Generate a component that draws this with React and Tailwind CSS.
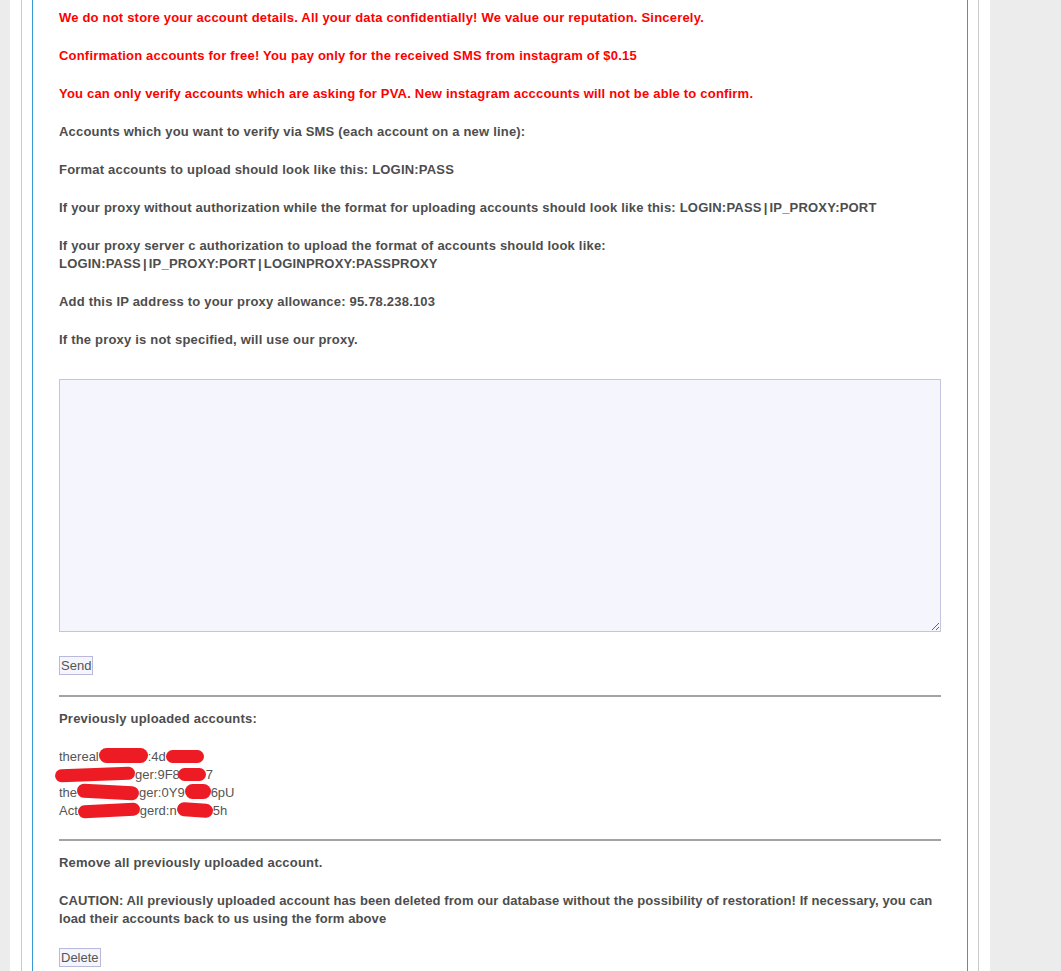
import React from 'react';

// red scribble standing in for a hidden part of an account line
function Redact({ w, className = '' }) {
  return (
    <span
      className={`inline-block h-[13px] rounded-full bg-[#ed1c24] align-[-2px] ${className}`}
      style={{ width: w }}
    />
  );
}

const Pipe = () => <span className="px-[2px]">|</span>;

function AccountsList() {
  return (
    <div className="text-[13px] leading-[18px] font-normal tracking-normal text-[#555]">
      <div className="whitespace-nowrap">
        thereal<Redact w={49} className="-mt-[3px] h-[15px]" />:4d<Redact w={38} className="h-[11px]" />
      </div>
      <div className="-ml-[4px] whitespace-nowrap">
        <Redact w={80} className="h-[13px] rotate-[-2deg]" />ger:9F8<Redact w={28} className="-ml-[2px] h-[12px]" />7
      </div>
      <div className="whitespace-nowrap">
        the<Redact w={62} className="h-[14px] rotate-[3deg]" />ger:0Y9<Redact w={26} className="h-[15px]" />6pU
      </div>
      <div className="whitespace-nowrap">
        Act<Redact w={62} className="h-[12px] rotate-[-3deg]" />gerd:n<Redact w={36} className="h-[14px] rotate-[4deg]" />5h
      </div>
    </div>
  );
}

export default function App() {
  return (
    <div className="min-h-screen bg-[#ececec] font-['Liberation_Sans',Arial,sans-serif]">
      <div className="ml-[10px] w-[980px] bg-white px-[11px]">
        <div className="border-x border-[#cccccc] bg-white px-[10px]">
          <div className="flex flex-col items-start gap-[20px] border-x border-[#3a9ad9] bg-white px-[26px] pt-[9px] pb-[40px] text-[13px] leading-[18px] font-bold tracking-[0.2px] text-[#4d4d4d]">
            <p className="text-[#ff0000]">
              We do not store your account details. All your data confidentially! We value our reputation. Sincerely.
            </p>
            <p className="text-[#ff0000]">
              Confirmation accounts for free! You pay only for the received SMS from instagram of $0.15
            </p>
            <p className="text-[#ff0000]">
              You can only verify accounts which are asking for PVA. New instagram acccounts will not be able to confirm.
            </p>
            <p>Accounts which you want to verify via SMS (each account on a new line):</p>
            <p>Format accounts to upload should look like this: LOGIN:PASS</p>
            <p>
              If your proxy without authorization while the format for uploading accounts should look like this: LOGIN:PASS<Pipe />IP_PROXY:PORT
            </p>
            <p>
              If your proxy server c authorization to upload the format of accounts should look like:
              <br />
              LOGIN:PASS<Pipe />IP_PROXY:PORT<Pipe />LOGINPROXY:PASSPROXY
            </p>
            <p>Add this IP address to your proxy allowance: 95.78.238.103</p>
            <p>If the proxy is not specified, will use our proxy.</p>

            <textarea className="mt-[10px] block h-[253px] w-[882px] resize border border-[#c4c4de] bg-[#f5f5fe] outline-none" />

            <button className="mt-[4px] h-[19px] border border-[#b9b9da] bg-[#f5f5fe] px-[1px] text-[13px] leading-[17px] font-normal tracking-normal text-[#555]">
              Send
            </button>

            <div className="h-[2px] w-[882px] bg-[#a3a3a3]" />

            <p className="-mt-[7px]">Previously uploaded accounts:</p>
            <AccountsList />

            <div className="-mt-[1px] h-[2px] w-[882px] bg-[#a3a3a3]" />

            <p className="-mt-[7px]">Remove all previously uploaded account.</p>
            <p className="tracking-[0.1px]">
              CAUTION: All previously uploaded account has been deleted from our database without the possibility of restoration! If necessary, you can load their accounts back to us using the form above
            </p>
            <button className="h-[19px] border border-[#b9b9da] bg-[#f5f5fe] px-[1px] text-[13px] leading-[17px] font-normal tracking-normal text-[#555]">
              Delete
            </button>
          </div>
        </div>
      </div>
    </div>
  );
}
